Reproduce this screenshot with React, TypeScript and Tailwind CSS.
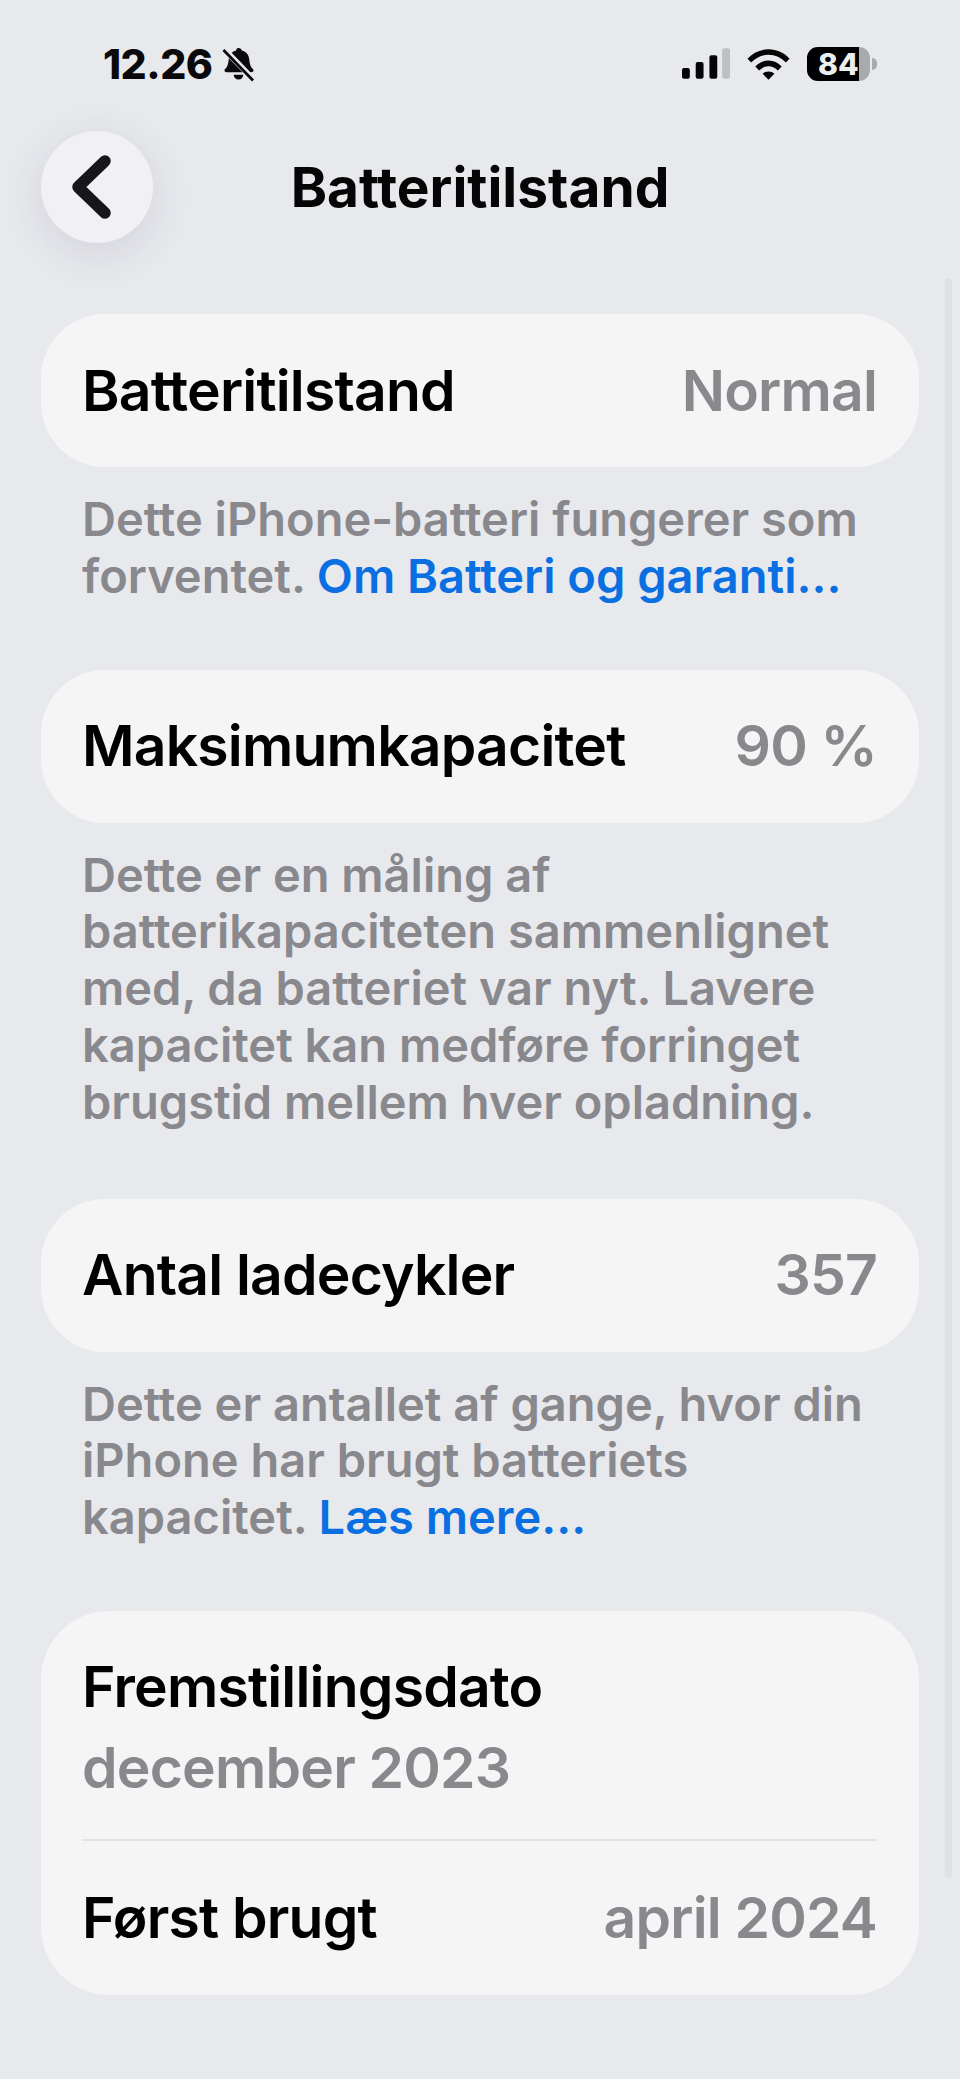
import { ReactNode } from 'react';

function BellOff() {
  return (
    <svg viewBox="0 0 34 36" className="w-[33px] h-[35px]" fill="#0a0a0c">
      <path d="M17 1c2 0 3 1 3.400 2.600 5 1.200 7.400 5 7.800 10 .3 4 1.300 6.800 3.800 9.400 1 1.200.4 3-1.500 3H4.500c-1.900 0-2.500-1.800-1.500-3 2.500-2.600 3.500-5.400 3.800-9.400.4-5 2.800-8.800 7.800-10C15 2 15 1 17 1z" />
      <path d="M12 28.500h10c-.3 3-2.300 5-5 5s-4.700-2-5-5z" />
      <path d="M2 2 L32 33" stroke="#e8e9ed" strokeWidth="6" />
      <path d="M1.500 3 L32 34.500" stroke="#0a0a0c" strokeWidth="2.800" />
    </svg>
  );
}

function StatusBar() {
  return (
    <div className="flex items-center justify-between h-[30px] pl-[103px] pr-[83px]">
      <div className="flex items-center gap-[10px]">
        <span className="text-[41px] font-extrabold leading-[30px] tracking-[-0.5px] text-[#0a0a0c]">12.26</span>
        <BellOff />
      </div>
      <div className="flex items-center">
        <svg viewBox="0 0 49 32" className="w-[48px] h-[32px]">
          <rect x="0" y="20" width="8" height="11" rx="2" fill="#050505" />
          <rect x="14" y="14" width="8" height="17" rx="2" fill="#050505" />
          <rect x="28" y="7" width="8" height="24" rx="2" fill="#050505" />
          <rect x="41" y="0" width="8" height="31" rx="2" fill="#bfc0c4" />
        </svg>
        <svg viewBox="0 0 44 32" className="w-[43px] h-[32px] ml-[17px]">
          <path d="M0.500 10.500C6 4.500 13.500 1 22 1s16 3.500 21.500 9.500l-3.800 4C35 9.500 29 6.500 22 6.500S9 9.500 4.300 14.500z" fill="#050505" />
          <path d="M8.500 18.500C12 14.700 16.800 12.500 22 12.500s10 2.200 13.500 6l-3.900 4.100C29 20 25.700 18.300 22 18.300s-7 1.700-9.600 4.300z" fill="#050505" />
          <path d="M16 26c1.500-1.500 3.700-2.400 6-2.400s4.500.9 6 2.400l-6 6z" fill="#050505" />
        </svg>
        <div className="relative flex ml-[17px] w-[63px] h-[34px] rounded-[11px] overflow-hidden bg-[#a9aaae]">
          <div className="w-[52px] h-full bg-black" />
          <span className="absolute left-[11px] top-0 text-[30px] font-extrabold leading-[34px] text-[#eceded]">84</span>
        </div>
        <div className="w-[5px] h-[12px] ml-[2px] rounded-r-full bg-[#a9aaae]" />
      </div>
    </div>
  );
}

function Header() {
  return (
    <div className="relative flex items-center justify-center h-[112px] mt-[52px]">
      <button className="absolute left-[41px] top-0 flex items-center justify-center w-[112px] h-[112px] rounded-full bg-[#f1f1f5] shadow-[0_10px_40px_rgba(60,60,80,0.12)]">
        <svg viewBox="0 0 40 64" className="w-[40px] h-[64px] mr-[10px]">
          <path d="M33 6 L6 32 L33 58" fill="none" stroke="#17171b" strokeWidth="11.500" strokeLinecap="round" strokeLinejoin="round" />
        </svg>
      </button>
      <h1 className="text-[55px] font-bold leading-[60px] text-[#050505]">Batteritilstand</h1>
    </div>
  );
}

function Row({ label, value }: { label: string; value: string }) {
  return (
    <div className="flex items-center justify-between h-[153px] pl-[41px] pr-[42px] rounded-[64px] bg-[#f5f5f6]">
      <span className="text-[57px] font-semibold tracking-[-0.8px] text-black">{label}</span>
      <span className="text-[57px] font-semibold tracking-[-0.8px] text-[#88888d]">{value}</span>
    </div>
  );
}

function Note({ children }: { children: ReactNode }) {
  return <p className="mt-[24px] px-[41px] text-[47px] font-semibold leading-[56.800px] text-[#88888d]">{children}</p>;
}

function Link({ children }: { children: ReactNode }) {
  return <span className="text-[#0a70e2]">{children}</span>;
}

export default function App() {
  return (
    <div className="relative min-h-[2079px] pt-[49px] bg-[#e8e9ed] font-['Inter',sans-serif]">
      <StatusBar />
      <Header />
      <div className="absolute right-[8px] top-[278px] w-[7px] h-[1600px] rounded-full bg-[#e0e1e5]" />
      <main className="relative flex flex-col mt-[71px] mx-[41px]">
        <Row label="Batteritilstand" value="Normal" />
        <Note>
          Dette iPhone-batteri fungerer som forventet. <Link>Om Batteri og garanti...</Link>
        </Note>
        <div className="mt-[65px]">
          <Row label="Maksimumkapacitet" value="90 %" />
        </div>
        <Note>
          Dette er en måling af batterikapaciteten sammenlignet med, da batteriet var nyt. Lavere kapacitet kan medføre forringet brugstid mellem hver opladning.
        </Note>
        <div className="mt-[68px]">
          <Row label="Antal ladecykler" value="357" />
        </div>
        <Note>
          Dette er antallet af gange, hvor din iPhone har brugt batteriets kapacitet. <Link>Læs mere...</Link>
        </Note>
        <div className="mt-[65px] pl-[41px] pr-[42px] h-[384px] rounded-[68px] bg-[#f5f5f6]">
          <div className="pt-[40px] h-[230px] border-b-2 border-[#e3e3e5]">
            <div className="text-[57px] font-semibold leading-[72px] tracking-[-0.8px] text-black">Fremstillingsdato</div>
            <div className="mt-[9px] text-[57px] font-semibold leading-[72px] tracking-[-0.8px] text-[#88888d]">december 2023</div>
          </div>
          <div className="flex items-center justify-between h-[154px]">
            <span className="text-[57px] font-semibold tracking-[-0.8px] text-black">Først brugt</span>
            <span className="text-[57px] font-semibold tracking-[-0.8px] text-[#88888d]">april 2024</span>
          </div>
        </div>
      </main>
    </div>
  );
}
